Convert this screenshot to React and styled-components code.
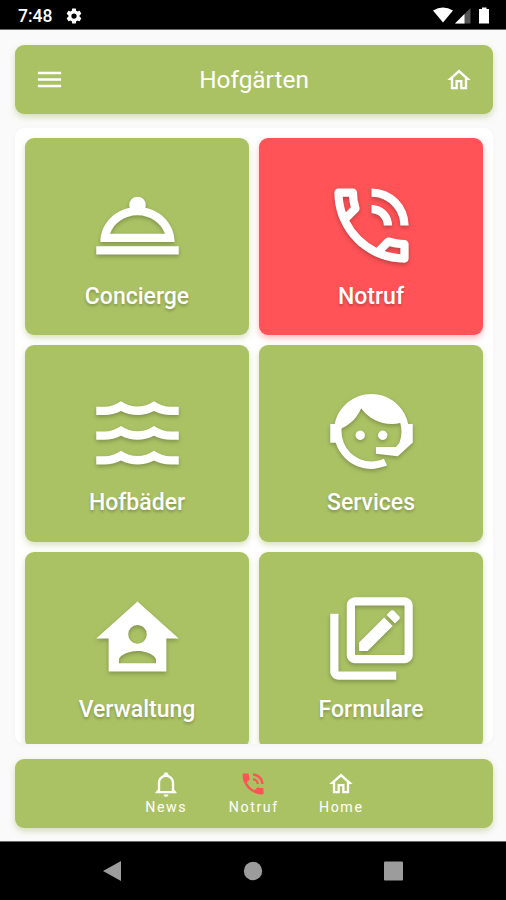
import styled, { createGlobalStyle } from "styled-components";

const THEME = {
  GREEN: "#abc264",
  RED: "#ff5357",
  PAGE: "#fafafa",
  NAV_GREY: "#9c9c9c",
};

const ICONS = {
  menu: "M3,6H21V8H3V6M3,11H21V13H3V11M3,16H21V18H3V16Z",
  home: "M12 5.69L17 10.19V18H15V12H9V18H7V10.19L12 5.69M12 3L2 12H5V20H11V14H13V20H19V12H22",
  bell: "M10 21H14C14 22.1 13.1 23 12 23S10 22.1 10 21M21 19V20H3V19L5 17V11C5 7.9 7.03 5.17 10 4.29C10 4.19 10 4.1 10 4C10 2.9 10.9 2 12 2S14 2.9 14 4C14 4.1 14 4.19 14 4.29C16.97 5.17 19 7.9 19 11V17L21 19M17 11C17 8.24 14.76 6 12 6S7 8.24 7 11V18H17V11Z",
  gear: "M12,15.5A3.5,3.5 0 0,1 8.5,12A3.5,3.5 0 0,1 12,8.5A3.5,3.5 0 0,1 15.5,12A3.5,3.5 0 0,1 12,15.5M19.43,12.97C19.47,12.65 19.5,12.33 19.5,12C19.5,11.67 19.47,11.34 19.43,11L21.54,9.37C21.73,9.22 21.78,8.95 21.66,8.73L19.66,5.27C19.54,5.05 19.27,4.96 19.05,5.05L16.56,6.05C16.04,5.66 15.5,5.32 14.87,5.07L14.5,2.42C14.46,2.18 14.25,2 14,2H10C9.75,2 9.54,2.18 9.5,2.42L9.13,5.07C8.5,5.32 7.96,5.66 7.44,6.05L4.95,5.05C4.73,4.96 4.46,5.05 4.34,5.27L2.34,8.73C2.21,8.95 2.27,9.22 2.46,9.37L4.57,11C4.53,11.34 4.5,11.67 4.5,12C4.5,12.33 4.53,12.65 4.57,12.97L2.46,14.63C2.27,14.78 2.21,15.05 2.34,15.27L4.34,18.73C4.46,18.95 4.73,19.03 4.95,18.95L7.44,17.94C7.96,18.34 8.5,18.68 9.13,18.93L9.5,21.58C9.54,21.82 9.75,22 10,22H14C14.25,22 14.46,21.82 14.5,21.58L14.87,18.93C15.5,18.67 16.04,18.34 16.56,17.94L19.05,18.95C19.27,19.03 19.54,18.95 19.66,18.73L21.66,15.27C21.78,15.05 21.73,14.78 21.54,14.63L19.43,12.97Z",
  phoneFilled:
    "M15,12H17A5,5 0 0,0 12,7V9A3,3 0 0,1 15,12M19,12H21C21,7 16.97,3 12,3V5C15.86,5 19,8.13 19,12M20,15.5C18.75,15.5 17.55,15.3 16.43,14.93C16.08,14.82 15.69,14.9 15.41,15.18L13.21,17.38C10.38,15.94 8.06,13.62 6.62,10.79L8.82,8.59C9.1,8.31 9.18,7.92 9.07,7.57C8.7,6.45 8.5,5.25 8.5,4A1,1 0 0,0 7.5,3H4A1,1 0 0,0 3,4A17,17 0 0,0 20,21A1,1 0 0,0 21,20V16.5A1,1 0 0,0 20,15.5Z",
  phone:
    "M19 12h2a9 9 0 0 0-9-9v2c3.87 0 7 3.13 7 7zm-4 0h2c0-2.76-2.24-5-5-5v2c1.66 0 3 1.34 3 3zm5 3.5c-1.25 0-2.45-.2-3.57-.57-.1-.03-.21-.05-.31-.05-.26 0-.51.1-.71.29l-2.2 2.2a15.045 15.045 0 0 1-6.59-6.58l2.2-2.21c.28-.27.36-.66.25-1.01A11.36 11.36 0 0 1 8.5 4c0-.55-.45-1-1-1H4c-.55 0-1 .45-1 1 0 9.39 7.61 17 17 17 .55 0 1-.45 1-1v-3.5c0-.55-.45-1-1-1zM5.03 5h1.5c.07.88.22 1.75.46 2.59L5.79 8.8c-.41-1.21-.67-2.48-.76-3.8zM19 18.97c-1.32-.09-2.6-.35-3.8-.76l1.2-1.2c.85.24 1.72.39 2.6.45v1.51z",
  concierge:
    "M12,5A2,2 0 0,1 14,7C14,7.24 13.96,7.47 13.88,7.69C17.95,8.5 21,11.91 21,16H3C3,11.91 6.05,8.5 10.12,7.69C10.04,7.47 10,7.24 10,7A2,2 0 0,1 12,5M22,19H2V17H22V19M12,9.5C8.89,9.5 6.25,11.39 5.34,14H18.66C17.75,11.39 15.11,9.5 12,9.5Z",
  waves:
    "M20,12H22V14H20C18.62,14 17.26,13.65 16,13C13.5,14.3 10.5,14.3 8,13C6.74,13.65 5.37,14 4,14H2V12H4C5.39,12 6.78,11.53 8,10.67C10.44,12.38 13.56,12.38 16,10.67C17.22,11.53 18.61,12 20,12M20,6H22V8H20C18.62,8 17.26,7.65 16,7C13.5,8.3 10.5,8.3 8,7C6.74,7.65 5.37,8 4,8H2V6H4C5.39,6 6.78,5.53 8,4.67C10.44,6.38 13.56,6.38 16,4.67C17.22,5.53 18.61,6 20,6M20,18H22V20H20C18.62,20 17.26,19.65 16,19C13.5,20.3 10.5,20.3 8,19C6.74,19.65 5.37,20 4,20H2V18H4C5.39,18 6.78,17.53 8,16.67C10.44,18.38 13.56,18.38 16,16.67C17.22,17.53 18.61,18 20,18Z",
  agent:
    "M18.72,14.76C19.07,13.91 19.26,13 19.26,12C19.26,11.28 19.15,10.59 18.96,9.95C18.31,10.1 17.63,10.18 16.92,10.18C13.86,10.18 11.15,8.67 9.5,6.34C8.61,8.5 6.91,10.26 4.77,11.22C4.73,11.47 4.73,11.74 4.73,12A7.27,7.27 0 0,0 12,19.27C13.05,19.27 14.06,19.04 14.97,18.63C15.54,19.72 15.8,20.26 15.78,20.26C14.14,20.81 12.87,21.08 12,21.08C9.58,21.08 7.27,20.13 5.57,18.42C4.53,17.38 3.76,16.11 3.33,14.73H2V10.18H3.09C3.93,6.04 7.6,2.92 12,2.92C14.4,2.92 16.71,3.87 18.42,5.58C19.69,6.84 20.54,8.45 20.89,10.18H22V14.73H21.94L18.38,18L13.08,17.4V15.73H17.91L18.72,14.76M9.27,11.77A1.14,1.14 0 1,1 9.26,11.77M14.72,11.77A1.14,1.14 0 1,1 14.71,11.77Z",
  homeAccount:
    "M12,3L2,12H5V20H19V12H22L12,3M12,8.75A2.25,2.25 0 0,1 14.25,11A2.25,2.25 0 0,1 12,13.25A2.25,2.25 0 0,1 9.75,11A2.25,2.25 0 0,1 12,8.75M12,15C13.5,15 16.5,15.75 16.5,17.25V18H7.5V17.25C7.5,15.75 10.5,15 12,15Z",
  forms:
    "M20 2H8C6.9 2 6 2.9 6 4V16C6 17.1 6.9 18 8 18H20C21.1 18 22 17.1 22 16V4C22 2.9 21.1 2 20 2M20 16H8V4H20V16M18 20V22H4C2.9 22 2 21.1 2 20V6H4V20H18M18.7 7.35L17.7 8.35L15.65 6.3L16.65 5.3C16.86 5.08 17.21 5.08 17.42 5.3L18.7 6.58C18.92 6.79 18.92 7.14 18.7 7.35M9 12.94L15.06 6.88L17.12 8.94L11.06 15H9V12.94Z",
};

const TILES = [
  { label: "Concierge", icon: "concierge" },
  { label: "Notruf", icon: "phone", alert: true },
  { label: "Hofbäder", icon: "waves" },
  { label: "Services", icon: "agent" },
  { label: "Verwaltung", icon: "homeAccount" },
  { label: "Formulare", icon: "forms" },
];

const TABS = [
  { label: "News", icon: "bell" },
  { label: "Notruf", icon: "phoneFilled", alert: true },
  { label: "Home", icon: "home" },
];

const GlobalStyle = createGlobalStyle`
  body {
    margin: 0;
    background: ${THEME.PAGE};
    font-family: Roboto, "Liberation Sans", sans-serif;
  }
  * {
    box-sizing: border-box;
  }
`;

const Screen = styled.div`
  display: flex;
  flex-direction: column;
  width: 506px;
  height: 900px;
  overflow: hidden;
`;

const StatusBar = styled.div`
  display: flex;
  align-items: center;
  flex: none;
  height: 30px;
  padding: 2px 16px 0 18px;
  background: #000;
  border-bottom: 1px solid #6a6a6a;
  color: #fff;
`;

const Clock = styled.span`
  width: 47px;
  font-size: 17.5px;
  font-weight: 500;
  line-height: 28px;
`;

const StatusIcons = styled.svg`
  display: block;
  margin-left: auto;
`;

const Page = styled.main`
  display: flex;
  flex-direction: column;
  flex: 1;
  min-height: 0;
  padding: 15px 13px 13px 15px;
`;

const Bar = styled.div`
  display: flex;
  flex: none;
  height: 69px;
  border-radius: 9px;
  background: ${THEME.GREEN};
  color: #fff;
  box-shadow: 0 3px 6px rgba(140, 165, 70, 0.35);
`;

const Toolbar = styled(Bar)`
  align-items: center;
  justify-content: space-between;
  padding: 0 20px 0 19px;
`;

const Title = styled.h1`
  margin: 0 2px 0 0;
  font-size: 24.4px;
  font-weight: 400;
`;

const Panel = styled.section`
  flex: 1;
  min-height: 0;
  margin: 14px 0 15px;
  padding: 10px 10px 0;
  overflow: hidden;
  border-radius: 9px;
  background: #fff;
  box-shadow: 0 1px 6px rgba(0, 0, 0, 0.03);
`;

const Grid = styled.div`
  display: grid;
  grid-template-columns: 1fr 1fr;
  grid-auto-rows: 196.8px;
  gap: 10px;
`;

const Tile = styled.div`
  display: flex;
  flex-direction: column;
  align-items: center;
  padding-top: 37.5px;
  border-radius: 9px;
  background: ${({ $alert }) => ($alert ? THEME.RED : THEME.GREEN)};
  color: #fff;
  box-shadow: 0 3px 6px
    ${({ $alert }) =>
      $alert ? "rgba(255, 83, 87, 0.4)" : "rgba(140, 165, 70, 0.35)"};

  svg {
    filter: drop-shadow(0 2px 2px rgba(0, 0, 0, 0.25));
  }
`;

const TileLabel = styled.span`
  margin-top: 8px;
  font-size: 23px;
  font-weight: 500;
  line-height: 28px;
  text-shadow: 0 2px 3px rgba(0, 0, 0, 0.25);
`;

const TabBar = styled(Bar)`
  justify-content: center;
  padding-right: 2px;
`;

const Tab = styled.div`
  display: flex;
  flex-direction: column;
  align-items: center;
  width: 87.5px;
  padding-top: 11px;

  svg {
    color: ${({ $alert }) => ($alert ? THEME.RED : "#fff")};
  }
`;

const TabLabel = styled.span`
  margin-left: 1.5px;
  font-size: 14.2px;
  letter-spacing: 1.6px;
  line-height: 19px;
`;

const SystemNav = styled.div`
  display: flex;
  align-items: center;
  justify-content: center;
  flex: none;
  height: 59px;
  border-top: 1px solid #6a6a6a;
  background: #000;

  svg {
    display: block;
  }
`;

const Svg = styled.svg`
  display: block;
  flex: none;
  fill: currentColor;
`;

const Icon = ({ name, size }) => (
  <Svg width={size} height={size} viewBox="0 0 24 24" fillRule="evenodd">
    <path d={ICONS[name]} />
  </Svg>
);

const App = () => {
  return (
    <>
      <GlobalStyle />
      <Screen>
        <StatusBar>
          <Clock>7:48</Clock>
          <Icon name="gear" size={18} />
          <StatusIcons width="57" height="18" viewBox="0 0 57 18" fill="#fff">
            <path d="M0 3.500Q10 -2.5 20 3.500L10 15.500Z" />
            <path d="M37.500 1V16.500H22Z" fill="#555" />
            <path d="M31.500 7V16.500H22Z" />
            <path d="M49 0.500h4.500v1.500h2.500v14.500h-10V2h3Z" />
          </StatusIcons>
        </StatusBar>
        <Page>
          <Toolbar>
            <Icon name="menu" size={31} />
            <Title>Hofgärten</Title>
            <Icon name="home" size={28} />
          </Toolbar>
          <Panel>
            <Grid>
              {TILES.map((tile) => (
                <Tile key={tile.label} $alert={tile.alert}>
                  <Icon name={tile.icon} size={99} />
                  <TileLabel>{tile.label}</TileLabel>
                </Tile>
              ))}
            </Grid>
          </Panel>
          <TabBar>
            {TABS.map((tab) => (
              <Tab key={tab.label} $alert={tab.alert}>
                <Icon name={tab.icon} size={28} />
                <TabLabel>{tab.label}</TabLabel>
              </Tab>
            ))}
          </TabBar>
        </Page>
        <SystemNav>
          <svg width="300" height="22" viewBox="0 0 300 22" fill={THEME.NAV_GREY}>
            <path d="M0 11L18 1V21Z" />
            <circle cx="150" cy="11" r="9.200" />
            <rect x="281" y="1.500" width="19" height="19" rx="1" />
          </svg>
        </SystemNav>
      </Screen>
    </>
  );
};

export default App;
